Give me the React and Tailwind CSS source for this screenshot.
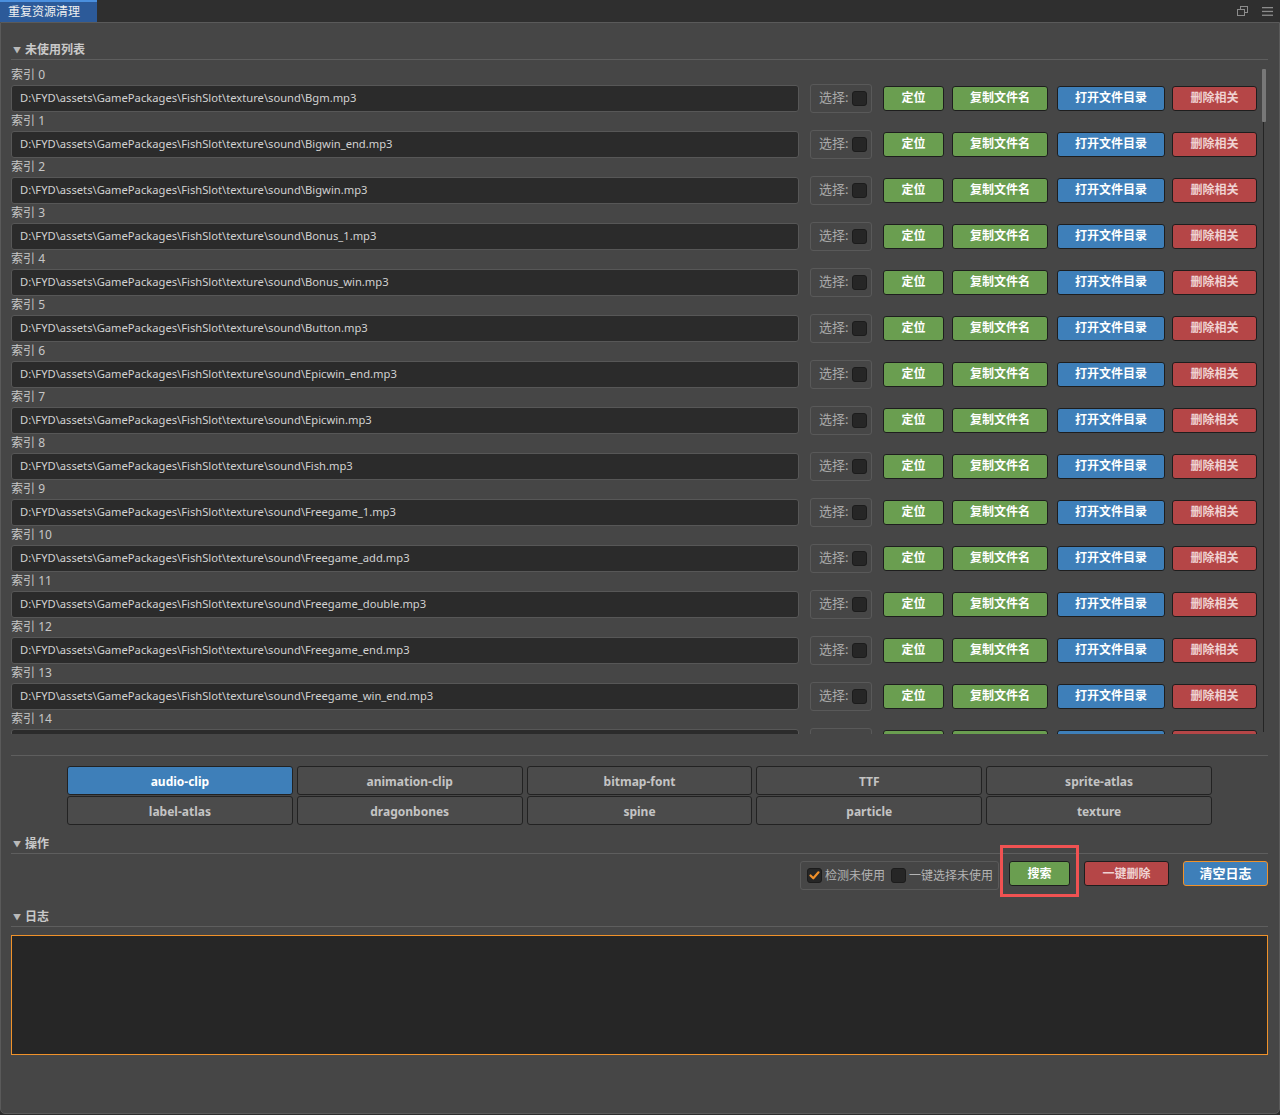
import React from "react";

const PREFIX = "D:\\FYD\\assets\\GamePackages\\FishSlot\\texture\\sound\\";
const FILES = [
  "Bgm.mp3",
  "Bigwin_end.mp3",
  "Bigwin.mp3",
  "Bonus_1.mp3",
  "Bonus_win.mp3",
  "Button.mp3",
  "Epicwin_end.mp3",
  "Epicwin.mp3",
  "Fish.mp3",
  "Freegame_1.mp3",
  "Freegame_add.mp3",
  "Freegame_double.mp3",
  "Freegame_end.mp3",
  "Freegame_win_end.mp3",
  "Freegame_win.mp3",
];

const TABS = [
  "audio-clip",
  "animation-clip",
  "bitmap-font",
  "TTF",
  "sprite-atlas",
  "label-atlas",
  "dragonbones",
  "spine",
  "particle",
  "texture",
];

const FONT = { fontFamily: '"Noto Sans", "Noto Sans CJK SC", sans-serif' };

function Header({ title }) {
  return (
    <div className="h-[20px] flex items-center border-b border-[#5e5e5e] text-[12px] font-bold text-[#c9c9c9]">
      <span className="ml-[2px] mr-[4px] text-[8px] text-[#b9b9b9]">▼</span>
      <span>{title}</span>
    </div>
  );
}

function Btn({ w, color, children, text = "text-white" }) {
  return (
    <div
      className={`${w} h-[25px] flex items-center justify-center rounded-[3px] border border-[#1e1e1e] text-[12px] font-bold ${color} ${text}`}
    >
      {children}
    </div>
  );
}

function Check({ checked }) {
  return (
    <div className="w-[15px] h-[15px] rounded-[3px] bg-[#262626] border border-[#1c1c1c] flex items-center justify-center">
      {checked && (
        <svg width="11" height="11" viewBox="0 0 11 11">
          <polyline
            points="1.5,5.5 4.3,8.3 9.5,2.3"
            fill="none"
            stroke="#f0902a"
            strokeWidth="2.2"
            strokeLinecap="round"
            strokeLinejoin="round"
          />
        </svg>
      )}
    </div>
  );
}

function Row({ i, file, hidden }) {
  return (
    <div>
      <div className="h-[18px] leading-[18px] text-[12px] text-[#c6c6c6]">索引 {i}</div>
      <div className="h-[28px] flex items-center">
        <div className="flex-1 h-[27px] flex items-center pl-[8px] rounded-[3px] bg-[#2b2b2b] border border-[#575757] text-[11.2px] text-[#d2d2d2] whitespace-nowrap overflow-hidden">
          {hidden ? "" : PREFIX + file}
        </div>
        <div className="ml-[11px] w-[62px] h-[29px] flex items-center pl-[8px] rounded-[3px] border border-[#595959] text-[13px] text-[#a9a9a9]">
          {!hidden && <span>选择:</span>}
          <div className="ml-[4px]">{!hidden && <Check />}</div>
        </div>
        <div className="ml-[11px]">
          <Btn w="w-[61px]" color="bg-[#6a9e50]">{hidden ? "" : "定位"}</Btn>
        </div>
        <div className="ml-[8px]">
          <Btn w="w-[96px]" color="bg-[#6a9e50]">{hidden ? "" : "复制文件名"}</Btn>
        </div>
        <div className="ml-[9px]">
          <Btn w="w-[108px]" color="bg-[#3e7fb9]">{hidden ? "" : "打开文件目录"}</Btn>
        </div>
        <div className="ml-[7px]">
          <Btn w="w-[85px]" color="bg-[#b54647]" text="text-[#efd2d2]">
            {hidden ? "" : "删除相关"}
          </Btn>
        </div>
      </div>
    </div>
  );
}

export default function App() {
  return (
    <div className="w-[1280px] h-[1115px] bg-[#2c2c2c] flex flex-col overflow-hidden" style={FONT}>
      {/* top bar */}
      <div className="h-[22px] flex items-stretch bg-[#2f2f2f] shrink-0">
        <div className="w-[97px] bg-[#2c5a99] border-t-[2px] border-[#4a8fde] flex items-center pl-[8px] text-[12px] text-[#f0f0f0]">
          重复资源清理
        </div>
        <div className="flex-1" />
        <div className="flex items-center gap-[14px] pr-[7px]">
          <svg width="11" height="10" viewBox="0 0 11 10">
            <rect x="3.5" y="0.5" width="7" height="6" fill="none" stroke="#8c8c8c" />
            <rect x="0.5" y="3.5" width="7" height="6" fill="#2f2f2f" stroke="#8c8c8c" />
          </svg>
          <svg width="11" height="9" viewBox="0 0 11 9">
            <rect x="0" y="0" width="11" height="1.3" fill="#8c8c8c" />
            <rect x="0" y="3.8" width="11" height="1.3" fill="#8c8c8c" />
            <rect x="0" y="7.6" width="11" height="1.3" fill="#8c8c8c" />
          </svg>
        </div>
      </div>

      {/* main panel */}
      <div className="flex-1 bg-[#464646] border-l border-r border-b border-t border-[#5a5a5a] rounded-b-[5px] pl-[10px] pr-[11px] pt-[17px] mb-[1px] flex flex-col">
        <Header title="未使用列表" />

        {/* list */}
        <div className="mt-[6px] h-[668px] overflow-hidden flex">
          <div className="flex-1 flex flex-col">
            {FILES.map((f, i) => (
              <Row key={i} i={i} file={f} hidden={i === 14} />
            ))}
          </div>
          <div className="w-[11px] relative">
            <div className="absolute left-[5px] top-[3px] w-[4px] h-[53px] bg-[#787878] rounded-[1px]" />
            <div className="absolute left-[6px] top-[56px] bottom-[2px] w-px bg-[#242424]" />
          </div>
        </div>

        <div className="mt-[21px] h-px bg-[#5e5e5e]" />

        {/* tabs */}
        <div className="mt-[10px] mx-auto w-[1145px] grid grid-cols-5 gap-x-[4px] gap-y-[1px]">
          {TABS.map((t, i) => (
            <div
              key={t}
              className={`h-[29px] flex items-center justify-center pt-[2px] rounded-[3px] border border-[#222] text-[12px] font-bold ${
                i === 0 ? "bg-[#3e7fb9] text-white" : "bg-[#4b4b4b] text-[#c4c4c4]"
              }`}
            >
              {t}
            </div>
          ))}
        </div>

        <div className="mt-[9px]">
          <Header title="操作" />
        </div>

        {/* controls */}
        <div className="mt-[7px] flex items-start justify-end">
          <div className="h-[29px] w-[199px] flex items-center pl-[6px] rounded-[3px] border border-[#5a5a5a] text-[12px] text-[#b4b4b4]">
            <Check checked />
            <span className="ml-[3px]">检测未使用</span>
            <div className="ml-[6px]">
              <Check />
            </div>
            <span className="ml-[3px]">一键选择未使用</span>
          </div>
          <div className="ml-[10px] relative">
            <Btn w="w-[61px]" color="bg-[#6a9e50]">搜索</Btn>
            <div className="absolute left-[-9px] top-[-16px] w-[79px] h-[52px] border-[3px] border-[#f05252] pointer-events-none" />
          </div>
          <div className="ml-[14px]">
            <Btn w="w-[85px]" color="bg-[#b54647]" text="text-[#efd2d2]">一键删除</Btn>
          </div>
          <div className="ml-[14px]">
            <div className="w-[85px] h-[25px] flex items-center justify-center rounded-[3px] border border-[#f0922a] bg-[#3e7fb9] text-[13px] font-bold text-white">
              清空日志
            </div>
          </div>
        </div>

        <div className="mt-[17px]">
          <Header title="日志" />
        </div>

        <div className="mt-[8px] h-[120px] bg-[#262626] border border-[#f0922a]" />
      </div>
    </div>
  );
}
